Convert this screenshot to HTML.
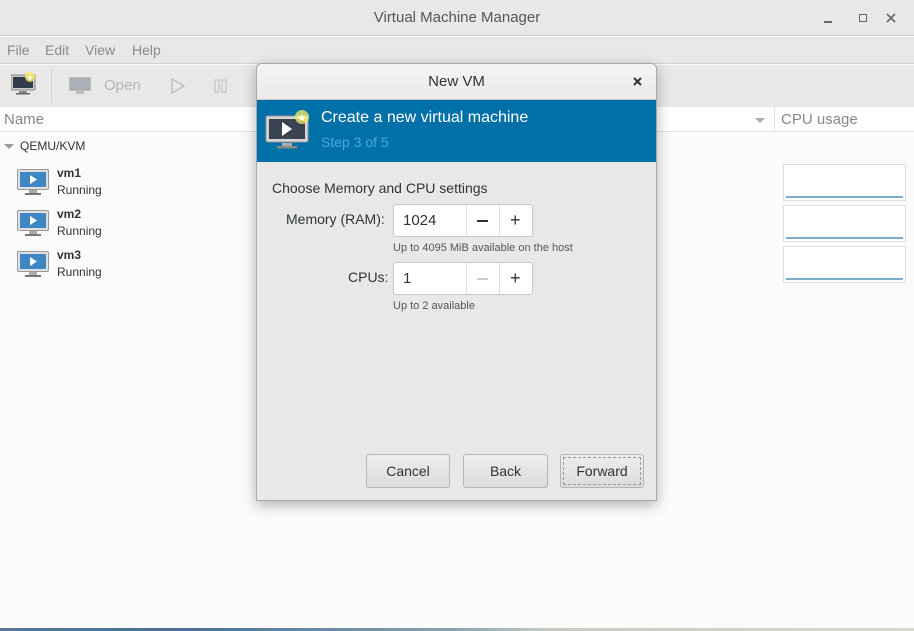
<!DOCTYPE html>
<html><head><meta charset="utf-8"><style>
*{margin:0;padding:0;box-sizing:border-box}
body{width:914px;height:631px;overflow:hidden;background:#fbfbfb;font-family:"Liberation Sans","DejaVu Sans",sans-serif;font-size:14px;color:#2e3436;position:relative}
.abs{position:absolute}
</style></head><body>
<!-- title bar -->
<div class="abs" style="left:0;top:0;width:914px;height:36px;background:#e8e8e7;border-bottom:1px solid #cfcfcd"></div>
<div class="abs" style="left:0;top:9px;width:914px;text-align:center;font-size:15px;color:#555">Virtual Machine Manager</div>
<div class="abs" style="left:824px;top:21px;width:8px;height:2px;background:#666"></div>
<div class="abs" style="left:859px;top:14px;width:8px;height:8px;border:1.5px solid #666"></div>
<svg class="abs" style="left:886px;top:13px" width="10" height="10"><path d="M1 1L9 9M9 1L1 9" stroke="#666" stroke-width="1.6"/></svg>
<!-- menu -->
<div class="abs" style="left:0;top:37px;width:914px;height:27px;background:#e8e8e7;border-bottom:1px solid #d3d3d1"></div>
<div class="abs" style="left:7px;top:42px;color:#8a8a8a">File</div>
<div class="abs" style="left:45px;top:42px;color:#8a8a8a">Edit</div>
<div class="abs" style="left:85px;top:42px;color:#8a8a8a">View</div>
<div class="abs" style="left:132px;top:42px;color:#8a8a8a">Help</div>
<!-- toolbar -->
<div class="abs" style="left:0;top:65px;width:914px;height:42px;background:#e8e8e7"></div>
<svg class="abs" style="left:11px;top:72px" width="26" height="24" viewBox="0 0 26 24"><rect x="0" y="3" width="24" height="15" rx="1" fill="#c9c9c9" stroke="#888"/><rect x="2" y="5" width="20" height="11" fill="#333c4a"/><rect x="8" y="19" width="8" height="2" fill="#888"/><rect x="5" y="21" width="14" height="1.5" fill="#666"/><circle cx="19" cy="5" r="5" fill="#f8f060" opacity=".8"/><text x="15.2" y="8.5" font-size="8" fill="#fff">★</text></svg>
<div class="abs" style="left:51px;top:69px;width:1px;height:34px;background:#d0d0ce"></div>
<svg class="abs" style="left:69px;top:77px" width="22" height="18"><rect x="0.5" y="0.5" width="21" height="13" rx="1" fill="#aab0b6" stroke="#bbb"/><rect x="7" y="14" width="8" height="3" fill="#bbb"/></svg>
<div class="abs" style="left:104px;top:77px;color:#b5b5b5;font-size:15px">Open</div>
<svg class="abs" style="left:170px;top:78px" width="16" height="16"><path d="M2 1 L14 8 L2 15 Z" fill="none" stroke="#bbb" stroke-width="1.3"/></svg>
<svg class="abs" style="left:214px;top:79px" width="14" height="14"><rect x="1" y="1" width="4" height="12" fill="none" stroke="#bbb"/><rect x="8" y="1" width="4" height="12" fill="none" stroke="#bbb"/></svg>
<!-- list header -->
<div class="abs" style="left:0;top:107px;width:914px;height:25px;background:#fff;border-bottom:1px solid #e2e2e2"></div>
<div class="abs" style="left:4px;top:111px;color:#888;font-size:15px">Name</div>
<div class="abs" style="left:774px;top:107px;width:1px;height:25px;background:#e2e2e2"></div>
<div class="abs" style="left:755px;top:118px;width:0;height:0;border-left:5px solid transparent;border-right:5px solid transparent;border-top:5px solid #aaa"></div>
<div class="abs" style="left:781px;top:111px;color:#888;font-size:15px">CPU usage</div>
<!-- tree -->
<div class="abs" style="left:4px;top:144px;width:0;height:0;border-left:5px solid transparent;border-right:5px solid transparent;border-top:5px solid #999"></div>
<div class="abs" style="left:20px;top:139px;font-size:12px">QEMU/KVM</div>
<svg class="abs" style="left:17px;top:169px" width="32" height="28"><rect x="0.5" y="0.5" width="31" height="20" rx="1.5" fill="#e0e0e0" stroke="#999"/><rect x="3" y="3" width="26" height="15" fill="#3e87c4"/><path d="M13 6 L20 10.5 L13 15Z" fill="#fff"/><rect x="12" y="21" width="8" height="3" fill="#aaa"/><rect x="8" y="24" width="16" height="2" fill="#777"/></svg>
<div class="abs" style="left:57px;top:166px;font-size:12px;font-weight:bold">vm1</div>
<div class="abs" style="left:57px;top:183px;font-size:12px">Running</div>
<svg class="abs" style="left:17px;top:210px" width="32" height="28"><rect x="0.5" y="0.5" width="31" height="20" rx="1.5" fill="#e0e0e0" stroke="#999"/><rect x="3" y="3" width="26" height="15" fill="#3e87c4"/><path d="M13 6 L20 10.5 L13 15Z" fill="#fff"/><rect x="12" y="21" width="8" height="3" fill="#aaa"/><rect x="8" y="24" width="16" height="2" fill="#777"/></svg>
<div class="abs" style="left:57px;top:207px;font-size:12px;font-weight:bold">vm2</div>
<div class="abs" style="left:57px;top:224px;font-size:12px">Running</div>
<svg class="abs" style="left:17px;top:251px" width="32" height="28"><rect x="0.5" y="0.5" width="31" height="20" rx="1.5" fill="#e0e0e0" stroke="#999"/><rect x="3" y="3" width="26" height="15" fill="#3e87c4"/><path d="M13 6 L20 10.5 L13 15Z" fill="#fff"/><rect x="12" y="21" width="8" height="3" fill="#aaa"/><rect x="8" y="24" width="16" height="2" fill="#777"/></svg>
<div class="abs" style="left:57px;top:248px;font-size:12px;font-weight:bold">vm3</div>
<div class="abs" style="left:57px;top:265px;font-size:12px">Running</div>
<!-- cpu graphs -->
<div class="abs" style="left:783px;top:164px;width:123px;height:37px;border:1px solid #ddd;background:#fff"><div class="abs" style="left:2px;bottom:2px;width:117px;height:2px;background:#7aaecb"></div></div>
<div class="abs" style="left:783px;top:205px;width:123px;height:37px;border:1px solid #ddd;background:#fff"><div class="abs" style="left:2px;bottom:2px;width:117px;height:2px;background:#7aaecb"></div></div>
<div class="abs" style="left:783px;top:246px;width:123px;height:37px;border:1px solid #ddd;background:#fff"><div class="abs" style="left:2px;bottom:2px;width:117px;height:2px;background:#7aaecb"></div></div>
<!-- bottom strip -->
<div class="abs" style="left:0;top:628px;width:914px;height:3px;background:linear-gradient(90deg,#5a7894,#4a6f96 20%,#8aa4b0 50%,#c8ccc4 60%,#d8d8d0)"></div>
<!-- dialog -->
<div class="abs" style="left:256px;top:63px;width:401px;height:438px;background:#e8e8e7;border:1px solid #a8a8a8;border-radius:6px 6px 0 0;box-shadow:0 4px 14px rgba(0,0,0,.3);overflow:hidden">
 <div style="height:36px;background:linear-gradient(#f4f4f3,#ecebea);border-bottom:1px solid #c8c8c6;text-align:center;padding-top:9px;font-size:15px;color:#2e3436">New VM</div>
 <svg class="abs" style="left:376px;top:13px" width="9" height="9"><path d="M1 1L8 8M8 1L1 8" stroke="#333" stroke-width="2"/></svg>
 <div style="height:62px;background:#0070a8;position:relative">
  <svg class="abs" style="left:8px;top:10px" width="46" height="42"><rect x="1" y="6" width="42" height="26" rx="1.5" fill="#d5d5d5" stroke="#999"/><rect x="4" y="9" width="36" height="20" fill="#3a4352"/><path d="M17 12 L27 19 L17 26Z" fill="#fff"/><rect x="17" y="33" width="10" height="3" fill="#aaa"/><rect x="12" y="36" width="20" height="2.5" fill="#888"/><circle cx="37" cy="7" r="7" fill="#f8f060" opacity=".75"/><text x="32" y="11.5" font-size="11" fill="#fff">★</text></svg>
  <div class="abs" style="left:64px;top:9px;font-size:16px;color:#fff">Create a new virtual machine</div>
  <div class="abs" style="left:64px;top:34px;font-size:14px;color:#4aa8de">Step 3 of 5</div>
 </div>
 <div class="abs" style="left:15px;top:116px;font-size:14px">Choose Memory and CPU settings</div>
 <div class="abs" style="left:29px;top:147px;font-size:14px">Memory (RAM):</div>
 <div class="abs" style="left:136px;top:140px;width:140px;height:33px;background:#fff;border:1px solid #c8c8c6;border-radius:3px">
  <span class="abs" style="left:9px;top:7px;font-size:15px">1024</span>
  <div class="abs" style="left:72px;top:0;width:1px;height:31px;background:#ddd"></div>
  <div class="abs" style="left:105px;top:0;width:1px;height:31px;background:#ddd"></div>
  <div class="abs" style="left:83px;top:15px;width:11px;height:1.5px;background:#333"></div>
  <div class="abs" style="left:116px;top:5px;font-size:18px;color:#333">+</div>
 </div>
 <div class="abs" style="left:136px;top:178px;font-size:11px;color:#555">Up to 4095 MiB available on the host</div>
 <div class="abs" style="left:91px;top:205px;font-size:14px">CPUs:</div>
 <div class="abs" style="left:136px;top:198px;width:140px;height:33px;background:#fff;border:1px solid #c8c8c6;border-radius:3px">
  <span class="abs" style="left:9px;top:7px;font-size:15px">1</span>
  <div class="abs" style="left:72px;top:0;width:1px;height:31px;background:#ddd"></div>
  <div class="abs" style="left:105px;top:0;width:1px;height:31px;background:#ddd"></div>
  <div class="abs" style="left:83px;top:15px;width:11px;height:1.5px;background:#ccc"></div>
  <div class="abs" style="left:116px;top:5px;font-size:18px;color:#333">+</div>
 </div>
 <div class="abs" style="left:136px;top:236px;font-size:11px;color:#555">Up to 2 available</div>
 <div class="abs" style="left:109px;top:390px;width:84px;height:34px;border:1px solid #b5b5b3;border-radius:3px;background:linear-gradient(#ededec,#dcdcda);text-align:center;padding-top:8px;font-size:14px">Cancel</div>
 <div class="abs" style="left:206px;top:390px;width:85px;height:34px;border:1px solid #b5b5b3;border-radius:3px;background:linear-gradient(#ededec,#dcdcda);text-align:center;padding-top:8px;font-size:14px">Back</div>
 <div class="abs" style="left:303px;top:390px;width:84px;height:34px;border:1px solid #b5b5b3;border-radius:3px;background:linear-gradient(#ededec,#dcdcda);text-align:center;padding-top:8px;font-size:14px"><div class="abs" style="left:2px;top:2px;right:2px;bottom:2px;border:1px dashed #999"></div>Forward</div>
</div>
</body></html>
